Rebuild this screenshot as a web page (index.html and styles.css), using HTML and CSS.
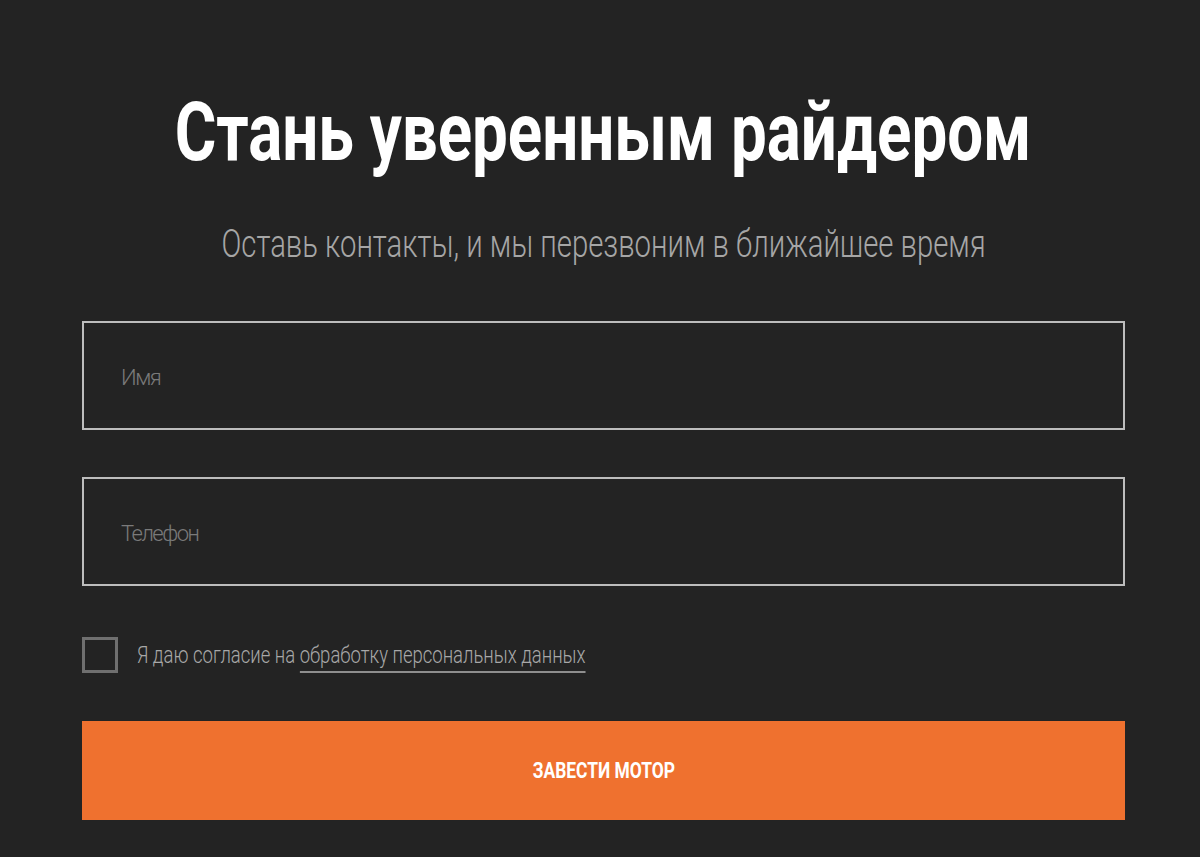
FILE: index.html
```html
<!DOCTYPE html>
<html lang="ru">
<head>
<meta charset="utf-8">
<title>Стань уверенным райдером</title>
<link rel="stylesheet" href="styles.css">
</head>
<body>
<section class="lead">
  <h1 class="title"><span class="squeeze">Стань уверенным райдером</span></h1>
  <p class="subtitle"><span class="squeeze">Оставь контакты, и мы перезвоним в ближайшее время</span></p>
  <form class="form">
    <input class="field" type="text" placeholder="Имя">
    <input class="field" type="tel" placeholder="Телефон">
    <label class="consent">
      <input class="check" type="checkbox">
      <span class="consent-text">Я даю согласие на <span class="link">обработку персональных данных</span></span>
    </label>
    <button class="submit" type="button"><span class="submit-text">ЗАВЕСТИ МОТОР</span></button>
  </form>
</section>
</body>
</html>
```
FILE: styles.css
```css
html, body {
  margin: 0;
  padding: 0;
  background: #232323;
}

body {
  font-family: Roboto, "DejaVu Sans", sans-serif;
  color: #ffffff;
}

.lead {
  box-sizing: border-box;
  width: 1043px;
  margin-left: 82px;
  padding: 82px 0 37px;
  display: flex;
  flex-direction: column;
}

.title {
  margin: 0;
  display: flex;
  justify-content: center;
  font-size: 82px;
  line-height: 100px;
  font-weight: 700;
  color: #ffffff;
  white-space: nowrap;
}

.squeeze {
  display: inline-block;
  flex: none;
}

.title .squeeze {
  transform: scaleX(0.776);
}

.subtitle {
  margin: 37px 0 0;
  display: flex;
  justify-content: center;
  font-size: 38px;
  line-height: 50px;
  font-weight: 300;
  color: #a6a6a6;
  white-space: nowrap;
}

.subtitle .squeeze {
  transform: scaleX(0.771);
}

.form {
  margin-top: 52px;
  display: flex;
  flex-direction: column;
}

.field {
  box-sizing: border-box;
  width: 100%;
  height: 109px;
  margin: 0 0 47px;
  padding: 4px 0 0 37px;
  border: 2px solid #bdbdbd;
  border-radius: 0;
  background: transparent;
  color: #dddddd;
  font-family: Roboto, "DejaVu Sans", sans-serif;
  font-size: 22px;
  font-weight: 300;
  letter-spacing: -1.5px;
  outline: none;
}

.field::placeholder {
  color: #7a7a7a;
  opacity: 1;
}

.consent {
  margin-top: 4px;
  display: flex;
  align-items: center;
  gap: 19px;
  cursor: pointer;
}

.check {
  appearance: none;
  -webkit-appearance: none;
  box-sizing: border-box;
  width: 36px;
  height: 36px;
  margin: 0;
  border: 3px solid #6f6f6f;
  background: transparent;
  flex: none;
}

.consent-text {
  display: inline-block;
  transform: scaleX(0.772);
  transform-origin: left center;
  white-space: nowrap;
  font-size: 24px;
  line-height: 30px;
  font-weight: 300;
  color: #a8a8a8;
}

.link {
  padding-bottom: 2px;
  border-bottom: 2px solid #8e8e8e;
}

.submit {
  margin-top: 48px;
  height: 99px;
  width: 100%;
  border: none;
  border-radius: 0;
  background: #ef712f;
  color: #ffffff;
  font-family: Roboto, "DejaVu Sans", sans-serif;
  font-size: 22px;
  font-weight: 700;
  cursor: pointer;
}

.submit-text {
  display: inline-block;
  transform: scaleX(0.792);
}
```
